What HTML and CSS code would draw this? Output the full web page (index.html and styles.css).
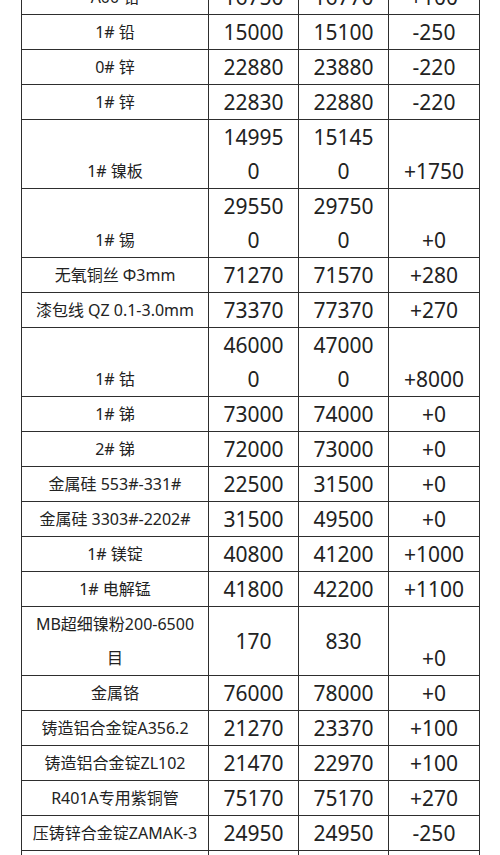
FILE: index.html
```html
<!DOCTYPE html>
<html lang="zh-CN">
<head>
<meta charset="utf-8">
<title>金属价格表</title>
<link rel="stylesheet" href="styles.css">
</head>
<body>
<div class="wrap">
<table class="price">
  <colgroup>
    <col class="c-name"><col class="c-num"><col class="c-num"><col class="c-chg">
  </colgroup>
  <tbody>
    <tr><td class="name">A00 铅</td><td class="num">16750</td><td class="num">16770</td><td class="chg">+100</td></tr>
    <tr><td class="name">1# 铅</td><td class="num">15000</td><td class="num">15100</td><td class="chg">-250</td></tr>
    <tr><td class="name">0# 锌</td><td class="num">22880</td><td class="num">23880</td><td class="chg">-220</td></tr>
    <tr><td class="name">1# 锌</td><td class="num">22830</td><td class="num">22880</td><td class="chg">-220</td></tr>
    <tr><td class="name">1# 镍板</td><td class="num">149950</td><td class="num">151450</td><td class="chg">+1750</td></tr>
    <tr><td class="name">1# 锡</td><td class="num">295500</td><td class="num">297500</td><td class="chg">+0</td></tr>
    <tr><td class="name">无氧铜丝 Φ3mm</td><td class="num">71270</td><td class="num">71570</td><td class="chg">+280</td></tr>
    <tr><td class="name">漆包线 QZ 0.1-3.0mm</td><td class="num">73370</td><td class="num">77370</td><td class="chg">+270</td></tr>
    <tr><td class="name">1# 钴</td><td class="num">460000</td><td class="num">470000</td><td class="chg">+8000</td></tr>
    <tr><td class="name">1# 锑</td><td class="num">73000</td><td class="num">74000</td><td class="chg">+0</td></tr>
    <tr><td class="name">2# 锑</td><td class="num">72000</td><td class="num">73000</td><td class="chg">+0</td></tr>
    <tr><td class="name">金属硅 553#-331#</td><td class="num">22500</td><td class="num">31500</td><td class="chg">+0</td></tr>
    <tr><td class="name">金属硅 3303#-2202#</td><td class="num">31500</td><td class="num">49500</td><td class="chg">+0</td></tr>
    <tr><td class="name">1# 镁锭</td><td class="num">40800</td><td class="num">41200</td><td class="chg">+1000</td></tr>
    <tr><td class="name">1# 电解锰</td><td class="num">41800</td><td class="num">42200</td><td class="chg">+1100</td></tr>
    <tr><td class="name">MB超细镍粉200-6500目</td><td class="num">170</td><td class="num">830</td><td class="chg">+0</td></tr>
    <tr><td class="name">金属铬</td><td class="num">76000</td><td class="num">78000</td><td class="chg">+0</td></tr>
    <tr><td class="name">铸造铝合金锭A356.2</td><td class="num">21270</td><td class="num">23370</td><td class="chg">+100</td></tr>
    <tr><td class="name">铸造铝合金锭ZL102</td><td class="num">21470</td><td class="num">22970</td><td class="chg">+100</td></tr>
    <tr><td class="name">R401A专用紫铜管</td><td class="num">75170</td><td class="num">75170</td><td class="chg">+270</td></tr>
    <tr><td class="name">压铸锌合金锭ZAMAK-3</td><td class="num">24950</td><td class="num">24950</td><td class="chg">-250</td></tr>
    <tr><td class="name">压铸锌合金锭ZAMAK-5</td><td class="num">25050</td><td class="num">25050</td><td class="chg">-250</td></tr>
  </tbody>
</table>
</div>
</body>
</html>
```

FILE: styles.css
```css
html, body {
  margin: 0;
  padding: 0;
  background: #ffffff;
}

body {
  font-family: "Noto Sans", "Noto Sans CJK SC", sans-serif;
  color: #222222;
  overflow: hidden;
}

.wrap {
  padding-left: 21px;
  margin-top: -21px;
}

.price {
  border-collapse: collapse;
  table-layout: fixed;
  width: 458px;
}

.c-name { width: 187px; }
.c-num { width: 90px; }
.c-chg { width: 91px; }

.price td {
  border: 1.5px solid #2e2e2e;
  line-height: 34px;
  text-align: center;
  padding: 0 10px;
  overflow-wrap: anywhere;
  word-break: break-all;
}

.price td.name {
  font-size: 16px;
  padding: 0 8px;
  vertical-align: bottom;
  word-break: normal;
}

.price td.num {
  font-size: 21px;
  vertical-align: middle;
}

.price td.chg {
  font-size: 21px;
  vertical-align: bottom;
}
```
